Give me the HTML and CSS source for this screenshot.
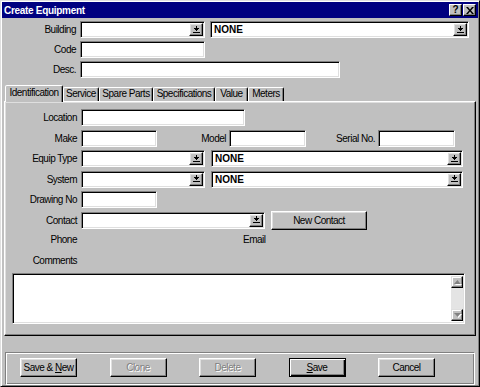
FILE: index.html
```html
<!DOCTYPE html>
<html lang="en">
<head>
    <meta charset="UTF-8">
    <title>Create Equipment</title>
    <link rel="stylesheet" href="styles.css">
</head>
<body>
    <div class="window">
        <div class="titlebar">
            <span class="title">Create Equipment</span>
            <div class="caption-buttons">
                <span class="caption-btn help">?</span>
                <span class="caption-btn">
                    <svg class="close-icon" width="8" height="7" viewBox="0 0 8 7"><path d="M0 0h2l2 2.5L6 0h2L5 3.5 8 7H6L4 4.5 2 7H0l3-3.5z"/></svg>
                </span>
            </div>
        </div>

        <!-- Header fields -->
        <div class="header-form">
            <div class="row">
                <span class="lbl">Building</span>
                <div class="field combo w-125">
                    <span class="drop"><svg class="arrow" width="7" height="8" viewBox="0 0 7 8"><rect x="3" y="0" width="1" height="2"/><rect x="1" y="2" width="5" height="1"/><rect x="2" y="3" width="3" height="1"/><rect x="3" y="4" width="1" height="1"/><rect x="0" y="6" width="7" height="1"/></svg></span>
                </div>
                <div class="field combo w-259 gap-5">
                    <span class="value">NONE</span>
                    <span class="drop"><svg class="arrow" width="7" height="8" viewBox="0 0 7 8"><rect x="3" y="0" width="1" height="2"/><rect x="1" y="2" width="5" height="1"/><rect x="2" y="3" width="3" height="1"/><rect x="3" y="4" width="1" height="1"/><rect x="0" y="6" width="7" height="1"/></svg></span>
                </div>
            </div>
            <div class="row">
                <span class="lbl">Code</span>
                <div class="field w-125"></div>
            </div>
            <div class="row">
                <span class="lbl">Desc.</span>
                <div class="field w-260"></div>
            </div>
        </div>

        <!-- Tabs -->
        <div class="tabs">
            <div class="tab active t-ident">Identification</div>
            <div class="tab t-service">Service</div>
            <div class="tab t-spare">Spare Parts</div>
            <div class="tab t-spec">Specifications</div>
            <div class="tab t-value">Value</div>
            <div class="tab t-meters">Meters</div>
        </div>

        <div class="panel">
            <div class="rows">
                <div class="row">
                    <span class="lbl">Location</span>
                    <div class="field w-164"></div>
                </div>
                <div class="row">
                    <span class="lbl">Make</span>
                    <div class="field w-76"></div>
                    <span class="lbl-inline">Model</span>
                    <div class="field w-77"></div>
                    <span class="lbl-inline">Serial No.</span>
                    <div class="field w-77"></div>
                </div>
                <div class="row">
                    <span class="lbl">Equip Type</span>
                    <div class="field combo w-124">
                        <span class="drop"><svg class="arrow" width="7" height="8" viewBox="0 0 7 8"><rect x="3" y="0" width="1" height="2"/><rect x="1" y="2" width="5" height="1"/><rect x="2" y="3" width="3" height="1"/><rect x="3" y="4" width="1" height="1"/><rect x="0" y="6" width="7" height="1"/></svg></span>
                    </div>
                    <div class="field combo w-252 gap-6">
                        <span class="value">NONE</span>
                        <span class="drop"><svg class="arrow" width="7" height="8" viewBox="0 0 7 8"><rect x="3" y="0" width="1" height="2"/><rect x="1" y="2" width="5" height="1"/><rect x="2" y="3" width="3" height="1"/><rect x="3" y="4" width="1" height="1"/><rect x="0" y="6" width="7" height="1"/></svg></span>
                    </div>
                </div>
                <div class="row">
                    <span class="lbl">System</span>
                    <div class="field combo w-124">
                        <span class="drop"><svg class="arrow" width="7" height="8" viewBox="0 0 7 8"><rect x="3" y="0" width="1" height="2"/><rect x="1" y="2" width="5" height="1"/><rect x="2" y="3" width="3" height="1"/><rect x="3" y="4" width="1" height="1"/><rect x="0" y="6" width="7" height="1"/></svg></span>
                    </div>
                    <div class="field combo w-252 gap-6">
                        <span class="value">NONE</span>
                        <span class="drop"><svg class="arrow" width="7" height="8" viewBox="0 0 7 8"><rect x="3" y="0" width="1" height="2"/><rect x="1" y="2" width="5" height="1"/><rect x="2" y="3" width="3" height="1"/><rect x="3" y="4" width="1" height="1"/><rect x="0" y="6" width="7" height="1"/></svg></span>
                    </div>
                </div>
                <div class="row">
                    <span class="lbl">Drawing No</span>
                    <div class="field w-76"></div>
                </div>
                <div class="row">
                    <span class="lbl">Contact</span>
                    <div class="field combo w-184">
                        <span class="drop"><svg class="arrow" width="7" height="8" viewBox="0 0 7 8"><rect x="3" y="0" width="1" height="2"/><rect x="1" y="2" width="5" height="1"/><rect x="2" y="3" width="3" height="1"/><rect x="3" y="4" width="1" height="1"/><rect x="0" y="6" width="7" height="1"/></svg></span>
                    </div>
                    <button class="btn new-contact">New Contact</button>
                </div>
            </div>

            <div class="info-row">
                <span class="lbl">Phone</span>
                <span class="email">Email</span>
            </div>
            <div class="info-row comments-row">
                <span class="lbl">Comments</span>
            </div>

            <div class="field comments">
                <div class="comments-text"></div>
                <div class="scrollbar">
                    <span class="scroll-btn"><svg class="scroll-arrow" width="7" height="4" viewBox="0 0 7 4"><path d="M3.5 0L7 4H0z"/></svg></span>
                    <span class="scroll-track"></span>
                    <span class="scroll-btn"><svg class="scroll-arrow" width="7" height="4" viewBox="0 0 7 4"><path d="M0 0h7L3.5 4z"/></svg></span>
                </div>
            </div>
        </div>

        <!-- Buttons -->
        <div class="button-bar">
            <button class="btn"><span>Save &amp; <u>N</u>ew</span></button>
            <button class="btn disabled">Clone</button>
            <button class="btn disabled">Delete</button>
            <button class="btn default"><span><u>S</u>ave</span></button>
            <button class="btn">Cancel</button>
        </div>
    </div>
</body>
</html>
```

FILE: styles.css
```css
* {
    box-sizing: border-box;
    margin: 0;
    padding: 0;
}

body {
    width: 480px;
    height: 387px;
    overflow: hidden;
    background: #c0c0c0;
    font-family: "Liberation Sans", Arial, sans-serif;
    font-size: 10px;
    letter-spacing: -0.5px;
    color: #000;
}

.window {
    width: 480px;
    height: 387px;
    border: 1px solid;
    border-color: #dfdfdf #000 #000 #dfdfdf;
    box-shadow: inset 1px 1px #fff, inset -1px -1px #808080;
    padding: 1px;
    display: flex;
    flex-direction: column;
}

/* Title bar */
.titlebar {
    height: 16px;
    background: #000080;
    display: flex;
    align-items: center;
    justify-content: space-between;
    padding: 0 2px 0 2px;
}

.title {
    color: #fff;
    font-weight: bold;
    letter-spacing: -0.3px;
}

.caption-buttons {
    display: flex;
    gap: 1px;
}

.caption-btn {
    width: 13px;
    height: 12px;
    background: #c0c0c0;
    border: 1px solid;
    border-color: #fff #000 #000 #fff;
    box-shadow: inset -1px -1px #808080;
    display: flex;
    align-items: center;
    justify-content: center;
}

.caption-btn.help {
    font-weight: bold;
    font-size: 10px;
    letter-spacing: 0;
    line-height: 1;
}

.close-icon {
    fill: #000;
}

/* Common rows */
.row {
    display: flex;
    align-items: center;
    height: 17px;
}

.lbl {
    text-align: right;
    margin-right: 4px;
    flex-shrink: 0;
}

.header-form {
    margin-top: 3px;
    display: flex;
    flex-direction: column;
    gap: 3px;
}

.header-form .lbl {
    width: 74px;
    padding-left: 2px;
}

/* Sunken fields */
.field {
    height: 17px;
    background: #fff;
    border: 1px solid;
    border-color: #808080 #fff #fff #808080;
    box-shadow: inset 1px 1px #000, inset -1px -1px #dfdfdf;
    flex-shrink: 0;
}

.combo {
    display: flex;
    align-items: center;
    padding: 1px;
}

.combo .value {
    font-weight: bold;
    letter-spacing: 0;
    padding-left: 2px;
}

.drop {
    margin-left: auto;
    width: 14px;
    height: 13px;
    background: #c0c0c0;
    border: 1px solid;
    border-color: #fff #000 #000 #fff;
    box-shadow: inset -1px -1px #808080, inset 1px 1px #dfdfdf;
    display: flex;
    align-items: center;
    justify-content: center;
}

.arrow {
    fill: #000;
    shape-rendering: crispEdges;
}

.w-76 { width: 76px; }
.w-77 { width: 77px; }
.w-124 { width: 124px; }
.w-125 { width: 125px; }
.w-164 { width: 164px; }
.w-184 { width: 184px; }
.w-252 { width: 252px; }
.w-259 { width: 259px; }
.w-260 { width: 260px; }

.gap-5 { margin-left: 5px; }
.gap-6 { margin-left: 6px; }

/* Tabs */
.tabs {
    margin-top: 7px;
    height: 16px;
    padding-left: 3px;
    display: flex;
    align-items: flex-end;
}

.tab {
    height: 14px;
    border: 1px solid;
    border-bottom: none;
    border-color: #fff #000 transparent #fff;
    box-shadow: inset -1px 0 #808080;
    border-radius: 2px 2px 0 0;
    text-align: center;
    line-height: 12px;
    flex-shrink: 0;
}

.tab.active {
    height: 17px;
    margin-bottom: -1px;
    position: relative;
    z-index: 1;
    background: #c0c0c0;
    line-height: 14px;
}

.t-ident { width: 58px; }
.t-service { width: 36px; }
.t-spare { width: 54px; }
.t-spec { width: 62px; }
.t-value { width: 33px; }
.t-meters { width: 36px; }

/* Tab panel */
.panel {
    margin: 0 2px;
    height: 235px;
    border: 1px solid;
    border-color: #fff #000 #000 #fff;
    box-shadow: inset -1px -1px #808080, inset 1px 1px #dfdfdf;
    padding: 7px 1px 0 1px;
}

.rows {
    display: flex;
    flex-direction: column;
    gap: 3.6px;
}

.panel .lbl {
    width: 71px;
}

.lbl-inline {
    width: 72px;
    text-align: right;
    padding-right: 3px;
    flex-shrink: 0;
}

.btn {
    height: 19px;
    background: #c0c0c0;
    border: 1px solid;
    border-color: #fff #000 #000 #fff;
    box-shadow: inset -1px -1px #808080, inset 1px 1px #dfdfdf;
    font-family: "Liberation Sans", Arial, sans-serif;
    font-size: 10px;
    letter-spacing: -0.5px;
    color: #000;
    flex-shrink: 0;
}

.new-contact {
    width: 96px;
    margin-left: 6px;
}

.info-row {
    display: flex;
    align-items: center;
    height: 13px;
    margin-top: 4px;
}

.email {
    margin-left: 162px;
}

.comments-row {
    margin-top: 8px;
}

.comments {
    margin: 6px 0 0 6px;
    width: 453px;
    height: 51px;
    display: flex;
    padding: 2px 1px 2px 2px;
}

.comments-text {
    flex: 1;
}

.scrollbar {
    width: 12px;
    display: flex;
    flex-direction: column;
}

.scroll-btn {
    height: 12px;
    background: #c0c0c0;
    border: 1px solid;
    border-color: #dfdfdf #000 #000 #dfdfdf;
    box-shadow: inset -1px -1px #808080, inset 1px 1px #fff;
    display: flex;
    align-items: center;
    justify-content: center;
}

.scroll-arrow {
    fill: #808080;
    filter: drop-shadow(1px 1px 0 #fff);
}

.scroll-track {
    flex: 1;
    background: #e4e4e4;
}

/* Bottom buttons */
.button-bar {
    margin: 16px 3px 0 3px;
    height: 33px;
    border: 1px solid;
    border-color: #808080 #fff #fff #808080;
    box-shadow: inset 1px 1px #fff, inset -1px -1px #808080;
    display: flex;
    align-items: flex-start;
    gap: 32.5px;
    padding: 5px 0 0 14px;
}

.button-bar .btn {
    width: 57px;
}

.btn.disabled {
    color: #808080;
    text-shadow: 1px 1px 0 #fff;
}

.btn.default {
    border-color: #000;
    box-shadow: inset 1px 1px #fff, inset -1px -1px #000, inset -2px -2px #808080;
}
```
